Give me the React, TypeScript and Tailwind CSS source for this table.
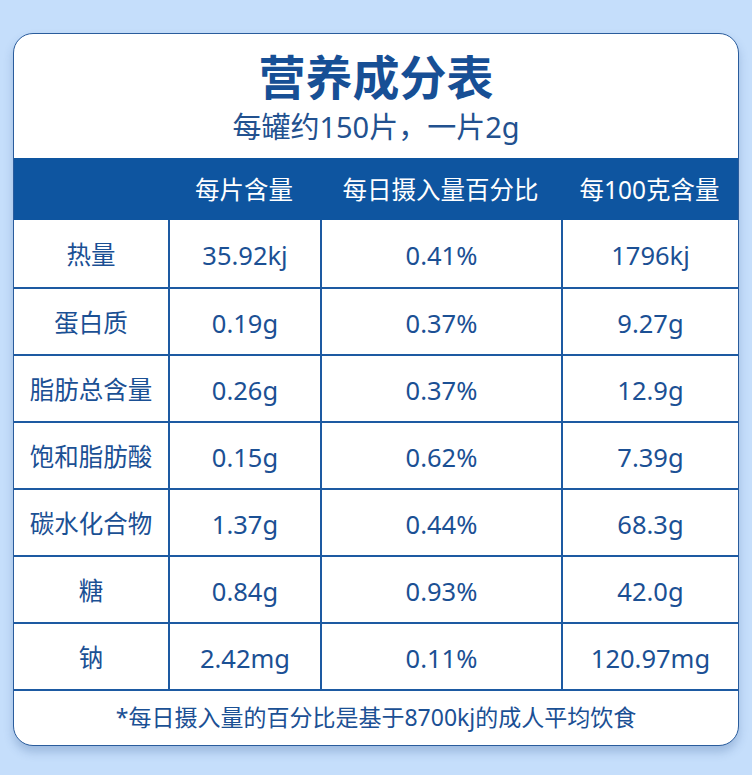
import React from 'react';

const rows = [
  ['热量', '35.92kj', '0.41%', '1796kj'],
  ['蛋白质', '0.19g', '0.37%', '9.27g'],
  ['脂肪总含量', '0.26g', '0.37%', '12.9g'],
  ['饱和脂肪酸', '0.15g', '0.62%', '7.39g'],
  ['碳水化合物', '1.37g', '0.44%', '68.3g'],
  ['糖', '0.84g', '0.93%', '42.0g'],
  ['钠', '2.42mg', '0.11%', '120.97mg'],
];

const font = { fontFamily: '"Noto Sans", "Noto Sans CJK SC", sans-serif' };

const App: React.FC = () => {
  return (
    <div className="w-[752px] h-[775px] bg-[#c5defb] pt-[33px] pl-[13px]" style={font}>
      <div className="w-[726px] h-[713px] bg-white rounded-[20px] border-[1.5px] border-[#2a5c9c] shadow-[0_6px_10px_rgba(40,80,140,0.25)] overflow-hidden flex flex-col">
        {/* Title */}
        <div className="h-[124px] flex flex-col items-center pt-[15px]">
          <h1 className="text-[47px] leading-[56px] font-bold text-[#174f95]">营养成分表</h1>
          <p className="text-[29px] leading-[38px] text-[#22518f] mt-[3px]">每罐约150片，一片2g</p>
        </div>

        {/* Header band */}
        <div className="h-[62px] bg-[#0e55a0] grid grid-cols-[154px_152px_241px_1fr] items-center text-white text-[24.5px] pt-[2px]">
          <div />
          <div className="text-center">每片含量</div>
          <div className="text-center">每日摄入量百分比</div>
          <div className="text-center">每100克含量</div>
        </div>

        {/* Body */}
        {rows.map((r, i) => (
          <div
            key={i}
            className={`h-[67px] grid grid-cols-[154px_152px_241px_1fr] text-[#1b5094] ${i > 0 ? 'border-t-2 border-[#1d5aa2]' : ''}`}
          >
            <div className="flex items-center justify-center text-[24.5px] pt-[4px]">{r[0]}</div>
            <div className="flex items-center justify-center text-[25.5px] pt-[4px] border-l-2 border-[#1d5aa2]">{r[1]}</div>
            <div className="flex items-center justify-center text-[25.5px] pt-[4px] border-l-2 border-[#1d5aa2]">{r[2]}</div>
            <div className="flex items-center justify-center text-[25.5px] pt-[4px] border-l-2 border-[#1d5aa2]">{r[3]}</div>
          </div>
        ))}

        {/* Footnote */}
        <div className="flex-1 border-t-2 border-[#1d5aa2] flex items-center justify-center text-[23px] text-[#1b5094] pb-[2px]">
          *每日摄入量的百分比是基于8700kj的成人平均饮食
        </div>
      </div>
    </div>
  );
};

export default App;
